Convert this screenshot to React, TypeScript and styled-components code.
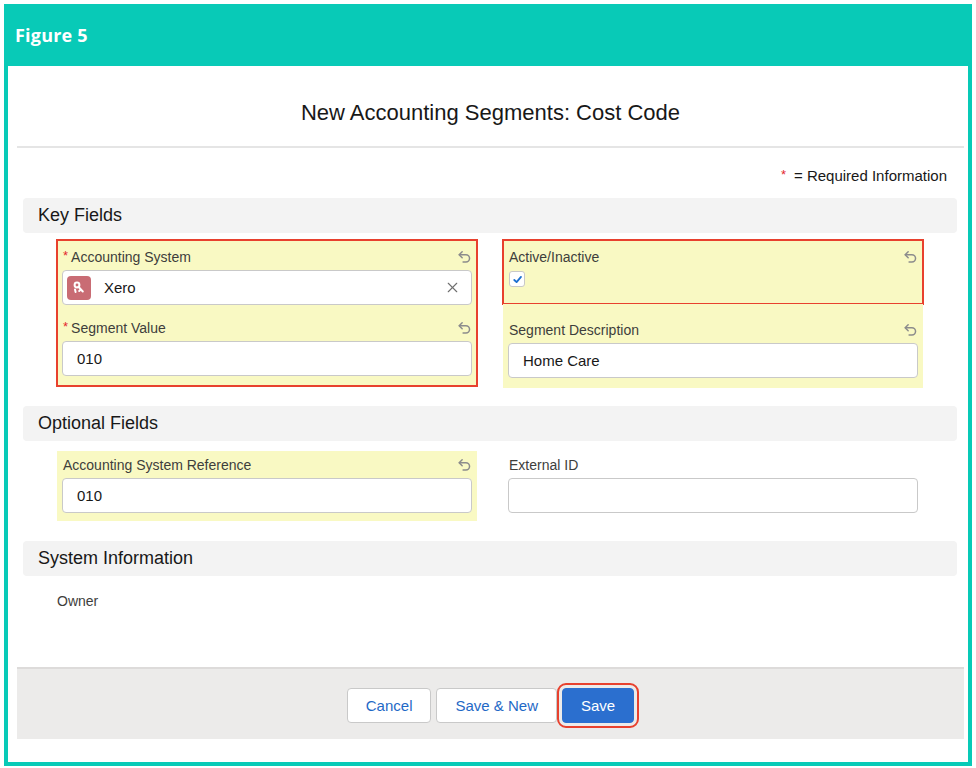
import React from "react";
import styled, { createGlobalStyle } from "styled-components";
import { X } from "lucide-react";

const GlobalStyle = createGlobalStyle`
  html, body { margin: 0; padding: 0; background: #ffffff; }
  body { font-family: "Liberation Sans", Arial, sans-serif; color: #181818; }
  * { box-sizing: border-box; }
`;

const Frame = styled.div`
  margin: 4px;
  width: 968px;
  height: 762px;
  background: #08cab7;
  padding: 0 4px 4px;
  display: flex;
  flex-direction: column;
`;

const FigureHeader = styled.header`
  height: 62px;
  flex: none;
  display: flex;
  align-items: center;
  padding-left: 7px;
  font-family: "Open Sans", "Liberation Sans", sans-serif;
  font-weight: 700;
  font-size: 18px;
  letter-spacing: 0.2px;
  color: #ffffff;
`;

const Body = styled.main`
  flex: 1;
  background: #ffffff;
  display: flex;
  flex-direction: column;
  padding: 0 4px 23px 9px;
`;

const TitleBar = styled.div`
  height: 82px;
  flex: none;
  padding-top: 14px;
  border-bottom: 2px solid #e5e5e5;
  display: flex;
  align-items: center;
  justify-content: center;
  font-size: 22px;
  color: #181818;
`;

const RequiredRow = styled.div`
  margin-top: 18px;
  line-height: 20px;
  font-size: 15px;
  text-align: right;
  padding-right: 17px;
  color: #181818;
`;

const Star = styled.span<{ $gap: number }>`
  color: #e3262d;
  font-size: 13px;
  margin-right: ${(p) => p.$gap}px;
  position: relative;
  top: -2px;
`;

const Section = styled.section<{ $top: number }>`
  margin: ${(p) => p.$top}px 7px 0 6px;
`;

const SectionHeader = styled.h2`
  margin: 0;
  height: 35px;
  background: #f3f3f3;
  border-radius: 4px;
  padding-left: 15px;
  display: flex;
  align-items: center;
  font-size: 18px;
  font-weight: 400;
  color: #181818;
`;

const Grid = styled.div<{ $top: number }>`
  display: grid;
  grid-template-columns: 420px 420px;
  column-gap: 26px;
  padding: 0 34px;
  margin-top: ${(p) => p.$top}px;
  align-items: start;
`;

const Column = styled.div`
  display: flex;
  flex-direction: column;
`;

const Marked = styled.div`
  background: #f9f9c3;
  padding: 2px 0;
  box-shadow: 0 0 0 1px #e8412e, inset 0 0 0 1px #e8412e;
`;

const Field = styled.div<{ $dirty?: boolean; $pt?: number; $pb?: number }>`
  background: ${(p) => (p.$dirty ? "#f9f9c3" : "transparent")};
  padding: ${(p) => p.$pt ?? 6}px 5px ${(p) => p.$pb ?? 8}px;
`;

const LabelRow = styled.div`
  height: 18px;
  display: flex;
  align-items: center;
  justify-content: space-between;
  font-size: 14px;
  color: #3e3e3c;
  padding-left: 1px;
`;

const LabelText = styled.span`
  display: flex;
  align-items: center;
`;

const Input = styled.div`
  margin-top: 4px;
  height: 35px;
  border: 1px solid #c9c9c9;
  border-radius: 4px;
  background: #ffffff;
  display: flex;
  align-items: center;
  padding: 0 14px;
  font-size: 15px;
  color: #181818;
`;

const LookupInput = styled(Input)`
  padding: 0 10px 0 4px;
`;

const LookupIcon = styled.span`
  width: 24px;
  height: 24px;
  border-radius: 4px;
  background: #c96c74;
  display: flex;
  align-items: center;
  justify-content: center;
  flex: none;
`;

const LookupText = styled.span`
  margin-left: 13px;
  flex: 1;
`;

const CheckRow = styled.div`
  margin-top: 5px;
  height: 23px;
  padding-left: 1px;
`;

const Checkbox = styled.span`
  width: 16px;
  height: 16px;
  border: 1px solid #c9c9c9;
  border-radius: 3px;
  background: #ffffff;
  display: flex;
  align-items: center;
  justify-content: center;
`;

const Owner = styled.div`
  margin-top: 16px;
  padding-left: 34px;
  line-height: 18px;
  font-size: 14px;
  color: #3e3e3c;
`;

const Footer = styled.footer`
  margin-top: auto;
  height: 72px;
  border-top: 2px solid #dddbda;
  background: #ecebea;
  display: flex;
  align-items: center;
  justify-content: center;
  gap: 5px;
  padding-top: 3px;
`;

const Button = styled.button<{ $brand?: boolean }>`
  height: 35px;
  padding: 0 18px;
  border-radius: 4px;
  border: 1px solid ${(p) => (p.$brand ? "#2b6fcf" : "#c9c9c9")};
  background: ${(p) => (p.$brand ? "#2b6fcf" : "#ffffff")};
  color: ${(p) => (p.$brand ? "#ffffff" : "#1f69c6")};
  font-family: "Liberation Sans", Arial, sans-serif;
  font-size: 15px;
  cursor: pointer;
  outline: ${(p) => (p.$brand ? "2px solid #e8412e" : "none")};
  outline-offset: 3px;
`;

const UndoIcon = () => (
  <svg width="15" height="15" viewBox="0 0 16 16" fill="none" stroke="#8c8c8c" strokeWidth="1.6" strokeLinecap="round" strokeLinejoin="round">
    <polyline points="5.5,1.8 2.3,5 5.5,8.2" />
    <path d="M2.6 5 H9.5 A3.9 3.9 0 0 1 9.5 12.8 H6.5" />
  </svg>
);

const KeyGlyph = () => (
  <svg width="16" height="16" viewBox="0 0 16 16" fill="none" stroke="#ffffff" strokeWidth="2" strokeLinecap="round">
    <circle cx="6" cy="5" r="2.4" />
    <path d="M7.6 6.8 L11.8 11.5" />
    <path d="M9.6 9.6 L8.2 11" />
    <path d="M4 9.5 L4.6 12" />
  </svg>
);

const CheckGlyph = () => (
  <svg width="11" height="11" viewBox="0 0 12 12" fill="none" stroke="#1b6fd0" strokeWidth="2" strokeLinecap="round" strokeLinejoin="round">
    <path d="M2.5 6.5 L5 8.8 L9.8 3.2" />
  </svg>
);

type LabelProps = { text: string; required?: boolean; undo?: boolean };

const Label = ({ text, required, undo }: LabelProps) => (
  <LabelRow>
    <LabelText>
      {required && <Star $gap={3}>*</Star>}
      {text}
    </LabelText>
    {undo && <UndoIcon />}
  </LabelRow>
);

export default function App() {
  return (
    <>
      <GlobalStyle />
      <Frame>
        <FigureHeader>Figure 5</FigureHeader>
        <Body>
          <TitleBar>New Accounting Segments: Cost Code</TitleBar>
          <RequiredRow>
            <Star $gap={8}>*</Star>= Required Information
          </RequiredRow>

          <Section $top={11}>
            <SectionHeader>Key Fields</SectionHeader>
            <Grid $top={7}>
              <Column>
                <Marked>
                  <Field>
                    <Label text="Accounting System" required undo />
                    <LookupInput>
                      <LookupIcon>
                        <KeyGlyph />
                      </LookupIcon>
                      <LookupText>Xero</LookupText>
                      <X size={17} color="#6f6f6f" strokeWidth={1.6} />
                    </LookupInput>
                  </Field>
                  <Field>
                    <Label text="Segment Value" required undo />
                    <Input>010</Input>
                  </Field>
                </Marked>
              </Column>
              <Column>
                <Marked>
                  <Field>
                    <Label text="Active/Inactive" undo />
                    <CheckRow>
                      <Checkbox>
                        <CheckGlyph />
                      </Checkbox>
                    </CheckRow>
                  </Field>
                </Marked>
                <Field $dirty $pt={17} $pb={10}>
                  <Label text="Segment Description" undo />
                  <Input>Home Care</Input>
                </Field>
              </Column>
            </Grid>
          </Section>

          <Section $top={18}>
            <SectionHeader>Optional Fields</SectionHeader>
            <Grid $top={10}>
              <Field $dirty $pt={5}>
                <Label text="Accounting System Reference" undo />
                <Input>010</Input>
              </Field>
              <Field $pt={5}>
                <Label text="External ID" />
                <Input />
              </Field>
            </Grid>
          </Section>

          <Section $top={20}>
            <SectionHeader>System Information</SectionHeader>
            <Owner>Owner</Owner>
          </Section>

          <Footer>
            <Button>Cancel</Button>
            <Button>Save &amp; New</Button>
            <Button $brand>Save</Button>
          </Footer>
        </Body>
      </Frame>
    </>
  );
}
